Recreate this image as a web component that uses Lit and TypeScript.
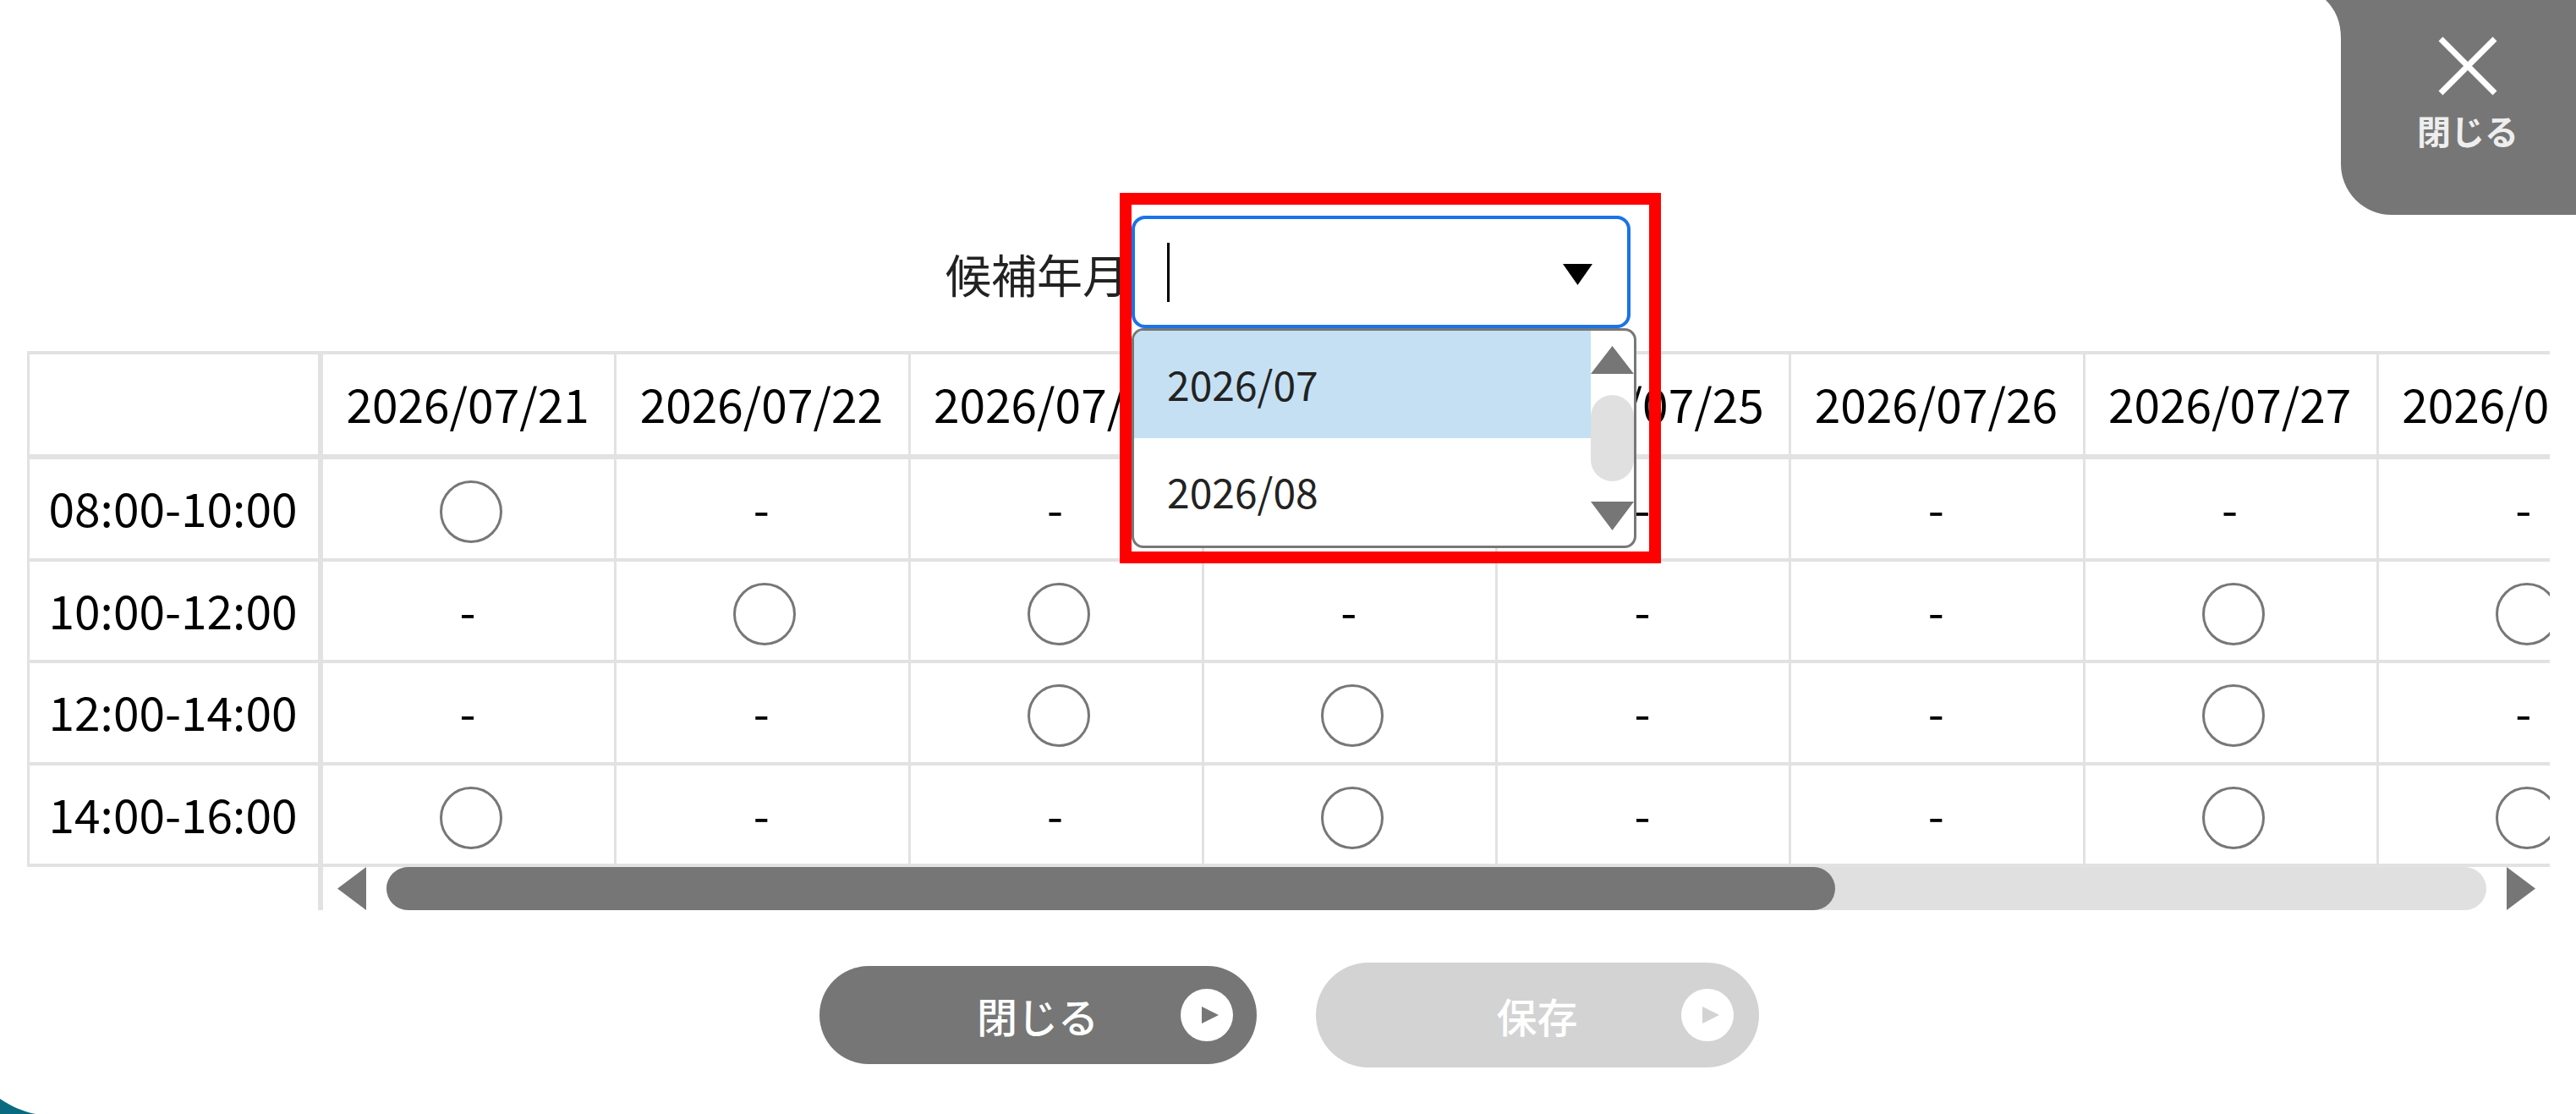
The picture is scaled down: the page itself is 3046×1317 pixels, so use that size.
import { LitElement, html, css, svg } from "lit";
import { customElement } from "lit/decorators.js";

const DATES = ["21","22","23","24","25","26","27","28"].map((d) => `2026/07/${d}`);
const ROWS: { time: string; marks: number[] }[] = [
  { time: "08:00-10:00", marks: [1,0,0,0,0,0,0,0] },
  { time: "10:00-12:00", marks: [0,1,1,0,0,0,1,1] },
  { time: "12:00-14:00", marks: [0,0,1,1,0,0,1,0] },
  { time: "14:00-16:00", marks: [1,0,0,1,0,0,1,1] },
];

@customElement("app-root")
export class AppRoot extends LitElement {
  static styles = css`
    :host {
      display: block;
      position: relative;
      width: 3046px;
      height: 1317px;
      overflow: hidden;
      background: #fff;
      color: #000;
      font-family: "Noto Sans CJK JP", "Noto Sans", sans-serif;
    }
    .page { display: flex; flex-direction: column; padding-top: 255px; }

    .picker { display: flex; justify-content: center; align-items: center; gap: 4px; height: 133px; }
    .picker-label { font-size: 54px; line-height: 1; width: 216px; white-space: nowrap; color: #222; padding-top: 4px; }
    .select-wrap { position: relative; width: 590px; height: 133px; }
    .select {
      box-sizing: border-box; width: 100%; height: 100%;
      border: 4px solid #1a73e8; border-radius: 16px; background: #fff;
      display: flex; align-items: center; justify-content: space-between;
      padding: 0 41px 0 38px;
    }
    .caret { width: 3px; height: 70px; background: #000; }
    .arrow { padding-top: 6px; }
    .list {
      position: absolute; left: 0; top: 133px; width: 597px; height: 260px; box-sizing: border-box;
      background: #fff; border: 3px solid #777; border-radius: 14px; overflow: hidden; z-index: 3;
      display: grid; grid-template-columns: 1fr 51px;
    }
    .items { display: flex; flex-direction: column; }
    .item {
      height: 127px; flex: none; display: flex; align-items: center;
      padding: 0 0 3px 39px; box-sizing: border-box; font-size: 48px; line-height: 1; color: #222;
    }
    .item.on { background: #c5e0f3; }
    .vbar { display: flex; flex-direction: column; align-items: center; justify-content: flex-start; padding-top: 18px; }
    .vthumb { width: 51px; height: 102px; border-radius: 26px; background: #e0e0e0; margin: 25px 0 24px; }
    .frame {
      position: absolute; left: -14px; top: -27px; width: 640px; height: 438px; box-sizing: border-box;
      border: 14px solid #f00; z-index: 4; pointer-events: none;
    }

    .table-wrap { margin: 27px 0 0 32px; width: 2983px; overflow: hidden; }
    .grid {
      display: grid;
      grid-template-columns: 350px repeat(8, 347.25px);
      grid-template-rows: 128px repeat(4, 120.5px);
      width: max-content;
    }
    .cell {
      box-sizing: border-box; display: flex; align-items: center; justify-content: center;
      border-bottom: 4px solid #e2e2e2; border-right: 3px solid #e2e2e2;
      font-size: 55px; line-height: 1; white-space: nowrap; padding: 0 2px 3px 0;
    }
    .cell.head { border-top: 4px solid #e2e2e2; border-bottom-width: 6px; }
    .cell.side { border-left: 3px solid #e2e2e2; border-right-width: 6px; }
    .mark { width: 74px; height: 74px; box-sizing: border-box; border: 3px solid #777; border-radius: 50%; margin: 11px 0 0 8px; }

    .hscroll { display: flex; align-items: stretch; height: 51px; margin-left: 32px; }
    .hside { width: 350px; flex: none; box-sizing: border-box; border-right: 6px solid #e2e2e2; }
    .hbody { display: flex; align-items: center; padding-left: 17px; }
    .track { width: 2483px; height: 51px; margin: 0 24px; border-radius: 26px; background: #e0e0e0; }
    .thumb { width: 1713px; height: 51px; border-radius: 26px; background: #767676; }

    .actions { display: flex; justify-content: center; align-items: center; gap: 70px; height: 124px; margin-top: 62px; padding-left: 2px; }
    .btn {
      display: grid; grid-template-columns: 1fr auto 1fr; align-items: center;
      border: none; border-radius: 62px; color: #fff; box-sizing: border-box;
      font-family: inherit; font-size: 48px; font-weight: 500; line-height: 1; padding: 0 28px;
    }
    .btn.close { width: 517px; height: 116px; background: #767676; }
    .btn.save { width: 524px; height: 124px; background: #d3d3d3; padding: 0 30px; }
    .btn svg { grid-column: 3; justify-self: end; display: block; }
    .btn span { grid-column: 2; }

    .corner-close {
      position: absolute; right: 0; top: 0; width: 296px; height: 254px; box-sizing: border-box;
      padding: 43px 0 0 40px; display: flex; flex-direction: column; align-items: center; z-index: 5;
    }
    .corner-bg { position: absolute; left: 0; top: 0; }
    .corner-close svg.x, .corner-close span { position: relative; }
    .corner-close span { color: #eee; font-size: 40px; font-weight: 700; line-height: 44px; margin-top: 19px; }
    .teal { position: absolute; left: 0; bottom: 0; display: block; }
  `;

  private tri(w: number, h: number, dir: "up" | "down" | "left" | "right", fill: string) {
    const pts = {
      up: `${w / 2},0 ${w},${h} 0,${h}`,
      down: `0,0 ${w},0 ${w / 2},${h}`,
      left: `${w},0 ${w},${h} 0,${h / 2}`,
      right: `0,0 ${w},${h / 2} 0,${h}`,
    }[dir];
    return html`<svg width=${w} height=${h} viewBox="0 0 ${w} ${h}" style="flex:none;display:block">${svg`<polygon points=${pts} fill=${fill}></polygon>`}</svg>`;
  }

  private play(fill: string) {
    return html`<svg width="62" height="62" viewBox="0 0 62 62"><circle cx="31" cy="31" r="31" fill="#fff"></circle><polygon points="25,21 45,31 25,41" fill=${fill}></polygon></svg>`;
  }

  render() {
    return html`
      <div class="page">
        <div class="picker">
          <div class="picker-label">候補年月</div>
          <div class="select-wrap">
            <div class="select">
              <div class="caret"></div>
              <div class="arrow">${this.tri(35, 25, "down", "#000")}</div>
            </div>
            <div class="list">
              <div class="items">
                <div class="item on">2026/07</div>
                <div class="item">2026/08</div>
              </div>
              <div class="vbar">
                ${this.tri(51, 33, "up", "#767676")}
                <div class="vthumb"></div>
                ${this.tri(51, 34, "down", "#767676")}
              </div>
            </div>
            <div class="frame"></div>
          </div>
        </div>

        <div class="table-wrap">
          <div class="grid">
            <div class="cell head side"></div>
            ${DATES.map((d) => html`<div class="cell head">${d}</div>`)}
            ${ROWS.map((r) => html`
              <div class="cell side">${r.time}</div>
              ${r.marks.map((m) => html`<div class="cell">${m ? html`<div class="mark"></div>` : "-"}</div>`)}
            `)}
          </div>
        </div>
        <div class="hscroll">
          <div class="hside"></div>
          <div class="hbody">
            ${this.tri(34, 51, "left", "#767676")}
            <div class="track"><div class="thumb"></div></div>
            ${this.tri(34, 51, "right", "#767676")}
          </div>
        </div>

        <div class="actions">
          <div class="btn close"><span>閉じる</span>${this.play("#767676")}</div>
          <div class="btn save"><span>保存</span>${this.play("#d3d3d3")}</div>
        </div>
      </div>

      <div class="corner-close">
        <svg class="corner-bg" width="296" height="254" viewBox="0 0 296 254"><path d="M0 0C12 12 18 26 18 46V194A60 60 0 0 0 78 254H296V0Z" fill="#767676"></path></svg>
        <svg class="x" width="70" height="70" viewBox="0 0 70 70"><path d="M3 3L67 67M67 3L3 67" stroke="#fff" stroke-width="7" fill="none"></path></svg>
        <span>閉じる</span>
      </div>

      <svg class="teal" width="42" height="18" viewBox="0 0 42 18"><path d="M0 0C12 8 26 15 42 18H0Z" fill="#0a6a80"></path></svg>
    `;
  }
}
